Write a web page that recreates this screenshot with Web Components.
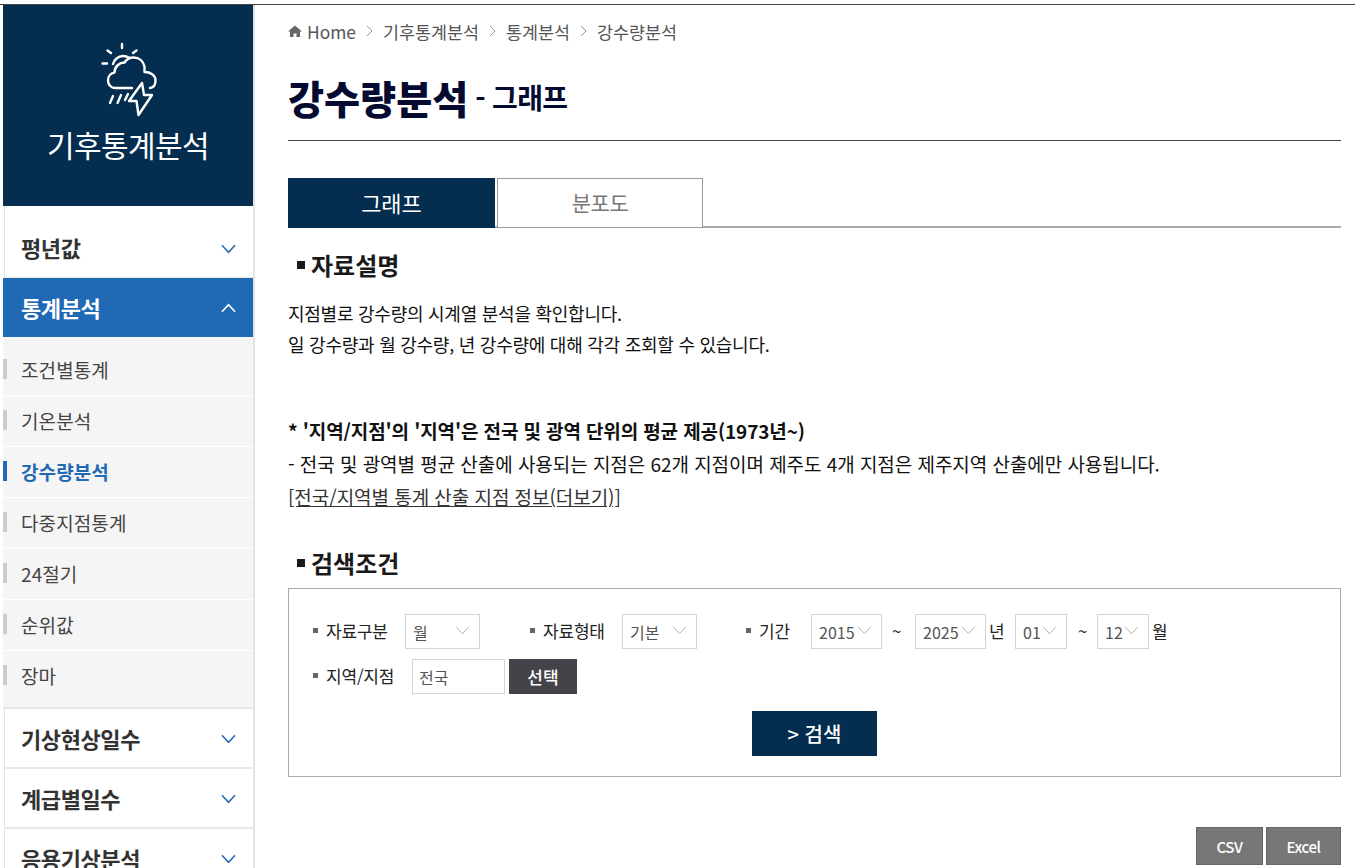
<!DOCTYPE html>
<html lang="ko">
<head>
<meta charset="utf-8">
<title>강수량분석</title>
<style>
html, body { margin: 0; height: 868px; overflow: hidden; background: #fff; }
body { font-family: "Noto Sans CJK KR", "Noto Sans", sans-serif; color: #111; }
</style>
</head>
<body>
<climate-page></climate-page>

<script>
const chevron = () => `<svg viewBox="0 0 16 10" fill="none" stroke="currentColor"><path d="M1 1l7 7.5L15 1"/></svg>`;

// one accordion row of the left menu
class SideItem extends HTMLElement {
    constructor() {
        super();
        this.attachShadow({ mode: 'open' }).innerHTML = `
<style>
:host { display: flex; align-items: center; justify-content: space-between; box-sizing: border-box;
  height: 60px; padding: 0 17px 0 16px; margin-left: 1px; background: #fff; border-left: 1px solid #e4e4e4;
  border-bottom: 2px solid #e8e8e8; font-size: 22px; font-weight: 700; letter-spacing: -.4px; color: #333; }
:host([open]) { height: 59px; margin-left: 0; border: 0; padding-left: 18px; background: #1f69b5; color: #fff; }
:host(.first) { height: 72px; padding-top: 15px; border-bottom-width: 1px; }
slot { display: block; }
:host([open]) slot { margin-bottom: 2px; }
:host(.first) slot { margin-bottom: 4px; }
svg { width: 15px; height: 10px; color: #2a6cb0; stroke-width: 1.7; margin-top: 2px; }
:host([open]) svg, :host(.first) svg { margin-top: 0; }
:host([open]) svg { transform: rotate(180deg); color: #fff; }
</style>
<slot></slot>${chevron()}`;
    }
}
customElements.define('side-item', SideItem);

// sub menu entry with the small bar on its left edge
class SideSub extends HTMLElement {
    constructor() {
        super();
        this.attachShadow({ mode: 'open' }).innerHTML = `
<style>
:host { display: flex; align-items: center; box-sizing: border-box; height: 51px; padding: 0 0 2px 18px; position: relative;
  border-bottom: 1px solid #fff; font-size: 19px; letter-spacing: .1px; color: #444; }
:host(:last-child) { border-bottom: 0; }
:host::before { content: ""; position: absolute; left: 0; top: 14px; width: 4px; height: 20px; background: #ccc; }
:host([active]) { color: #1f69b5; font-weight: 700; }
:host([active])::before { background: #1f69b5; }
</style>
<slot></slot>`;
    }
}
customElements.define('side-sub', SideSub);

class SideBar extends HTMLElement {
    constructor() {
        super();
        this.attachShadow({ mode: 'open' }).innerHTML = `
<style>
:host { display: block; flex: none; width: 250px; margin-left: 3px; border-right: 2px solid #e4e4e4; }
.head { height: 201px; background: #042d4f; color: #fff; display: flex; flex-direction: column; align-items: center; box-sizing: border-box; padding-top: 37px; }
.head svg { width: 58px; height: 76px; margin-left: 2px; flex: none; }
.head div { font-size: 30px; line-height: 44px; margin-top: 4px; letter-spacing: -.6px; }
.subs { background: #f5f5f5; padding: 8px 0 5px; border-bottom: 2px solid #e8e8e8; }
</style>
<div class="head">
  <svg viewBox="100 42 58 76" fill="none" stroke="#fff" stroke-width="2.400" stroke-linecap="round" stroke-linejoin="round">
    <path d="M122 44v4M107.500 50.500l3.500 2.500M136.500 50.500l-3.500 2.500M102.500 63.500h4.500"/>
    <path d="M113 64c1-4 5-8 10-8 3 0 5 1 7 2"/>
    <path d="M132 88h-17c-4 0-7-3.500-7-7.500 0-4.500 3-7.500 6.500-8 0-6 5-10 10-10 2-3 5-5 9-5 6 0 10 4 11 9 0 2 0 4 0 5.500 6 0 11 3 11 8.500 0 4-2 7-5.500 7.500"/>
    <path d="M113 96l-3 7M121 95l-3.500 8M128 94l-3 6"/>
    <path d="M142 83l-13 18h7.500l2 14 13.500-20h-8l-2-12z"/>
  </svg>
  <div>기후통계분석</div>
</div>
<side-item class="first">평년값</side-item>
<side-item open>통계분석</side-item>
<div class="subs">
  <side-sub>조건별통계</side-sub>
  <side-sub>기온분석</side-sub>
  <side-sub active>강수량분석</side-sub>
  <side-sub>다중지점통계</side-sub>
  <side-sub>24절기</side-sub>
  <side-sub>순위값</side-sub>
  <side-sub>장마</side-sub>
</div>
<side-item>기상현상일수</side-item>
<side-item>계급별일수</side-item>
<side-item>응용기상분석</side-item>`;
    }
}
customElements.define('side-bar', SideBar);

class CrumbBar extends HTMLElement {
    constructor() {
        super();
        const sep = `<svg class="sep" viewBox="0 0 7 12" fill="none" stroke="#999" stroke-width="1"><path d="M1 1l5 5-5 5"/></svg>`;
        this.attachShadow({ mode: 'open' }).innerHTML = `
<style>
:host { display: flex; align-items: center; height: 52px; font-size: 17.400px; color: #555; }
.home { width: 14px; height: 12px; margin-right: 5px; }
.sep { width: 7px; height: 12px; margin: 0 10px; }
</style>
<svg class="home" viewBox="0 0 14 12" fill="#666"><path d="M7 .5L0 6.500h2V12h3.500V8.500h3V12H12V6.500h2z"/></svg>
<span>Home</span>${sep}<span>기후통계분석</span>${sep}<span>통계분석</span>${sep}<span>강수량분석</span>`;
    }
}
customElements.define('crumb-bar', CrumbBar);

class PageTitle extends HTMLElement {
    constructor() {
        super();
        this.attachShadow({ mode: 'open' }).innerHTML = `
<style>
:host { display: flex; align-items: center; box-sizing: border-box; height: 84px; border-bottom: 1px solid #444; padding: 2px 0 6px; color: #050a30; font-weight: 700; }
b { font-size: 39.200px; margin-right: 7px; }
span { font-size: 28px; letter-spacing: -.7px; font-weight: 700; }
</style>
<b>강수량분석</b><span>- 그래프</span>`;
    }
}
customElements.define('page-title', PageTitle);

class TabBar extends HTMLElement {
    constructor() {
        super();
        this.attachShadow({ mode: 'open' }).innerHTML = `
<style>
:host { display: flex; margin-top: 37px; height: 50px; box-shadow: inset 0 -2px 0 #aaa; font-size: 22px; }
div { display: flex; align-items: center; justify-content: center; box-sizing: border-box; padding-bottom: 2px; }
.on { width: 207px; background: #042d4f; color: #fff; margin-right: 2px; }
.off { width: 206px; background: #fff; border: 1px solid #999; color: #777; font-size: 21px; letter-spacing: -.5px; }
</style>
<div class="on">그래프</div><div class="off">분포도</div>`;
    }
}
customElements.define('tab-bar', TabBar);

class SectionHead extends HTMLElement {
    constructor() {
        super();
        this.attachShadow({ mode: 'open' }).innerHTML = `
<style>
:host { display: flex; align-items: center; padding-left: 9px; font-size: 24px; font-weight: 700; color: #1a1a1a; line-height: 36px; }
:host::before { content: ""; width: 8px; height: 8px; background: #1a1a1a; margin-right: 6px; }
</style>
<slot></slot>`;
    }
}
customElements.define('section-head', SectionHead);

// the fake select box: text plus thin chevron
class FieldSelect extends HTMLElement {
    constructor() {
        super();
        this.attachShadow({ mode: 'open' }).innerHTML = `
<style>
:host { display: flex; align-items: center; justify-content: space-between; box-sizing: border-box; height: 35px; flex: none;
  background: #fff; border: 1px solid #d5d5d5; padding: 0 9px 0 7px; font-size: 16px; color: #555; }
svg { width: 15px; height: 9px; color: #aaa; margin-top: -3px; stroke-width: 1; }
</style>
<slot></slot>${chevron()}`;
    }
}
customElements.define('field-select', FieldSelect);

class FieldLabel extends HTMLElement {
    constructor() {
        super();
        this.attachShadow({ mode: 'open' }).innerHTML = `
<style>
:host { display: flex; align-items: center; flex: none; font-size: 17px; letter-spacing: -.2px; color: #222; padding-bottom: 2px; }
:host::before { content: ""; width: 5px; height: 5px; background: #666; margin-right: 8px; }
</style>
<slot></slot>`;
    }
}
customElements.define('field-label', FieldLabel);

class SearchForm extends HTMLElement {
    constructor() {
        super();
        this.attachShadow({ mode: 'open' }).innerHTML = `
<style>
:host { display: block; box-sizing: border-box; height: 189px; border: 1px solid #aaa; padding: 25px 0 0 24px; font-size: 17px; }
.row { display: flex; align-items: center; height: 35px; margin-bottom: 10px; }
.t { flex: none; color: #222; padding-bottom: 2px; }
.input { box-sizing: border-box; width: 93px; height: 35px; border: 1px solid #d5d5d5; display: flex; align-items: center; padding-left: 6px; font-size: 16px; color: #555; }
.pick { width: 68px; height: 35px; margin-left: 4px; background: #434349; color: #fff; font-weight: 500; display: flex; align-items: center; justify-content: center; }
.go { width: 125px; height: 45px; margin: 17px 0 0 439px; background: #042d4f; color: #fff; font-size: 20px; font-weight: 500; display: flex; align-items: center; justify-content: center; }
</style>
<div class="row">
  <field-label style="width:92px">자료구분</field-label>
  <field-select style="width:75px">월</field-select>
  <field-label style="width:92px;margin-left:50px">자료형태</field-label>
  <field-select style="width:75px">기본</field-select>
  <field-label style="width:65px;margin-left:49px">기간</field-label>
  <field-select style="width:71px">2015</field-select>
  <span class="t" style="margin:0 12px 0 10px;width:11px">~</span>
  <field-select style="width:71px">2025</field-select>
  <span class="t" style="margin:0 10px 0 3px;width:16px">년</span>
  <field-select style="width:52px">01</field-select>
  <span class="t" style="margin:0 8px 0 11px;width:11px">~</span>
  <field-select style="width:52px">12</field-select>
  <span class="t" style="margin-left:3px">월</span>
</div>
<div class="row">
  <field-label style="width:99px">지역/지점</field-label>
  <div class="input">전국</div>
  <div class="pick">선택</div>
</div>
<div class="go">&gt; 검색</div>`;
    }
}
customElements.define('search-form', SearchForm);

class ExportBtn extends HTMLElement {
    constructor() {
        super();
        this.attachShadow({ mode: 'open' }).innerHTML = `
<style>
:host { display: flex; align-items: center; justify-content: center; box-sizing: border-box; height: 38px; background: #777; border: 1px solid #666; color: #fff; font-size: 15px; font-weight: 500; letter-spacing: -.5px; }
</style>
<slot></slot>`;
    }
}
customElements.define('export-btn', ExportBtn);

class ClimatePage extends HTMLElement {
    constructor() {
        super();
        this.attachShadow({ mode: 'open' }).innerHTML = `
<style>
:host { display: flex; margin-top: 4px; border-top: 1px solid #444; height: 863px; overflow: hidden; }
main { flex: 1; min-width: 0; padding: 0 14px 0 33px; font-size: 18px; color: #111; }
.head1 { margin-top: 19px; }
.desc { margin: 15px 0 0; line-height: 31px; letter-spacing: -.25px; }
.note { margin: 54px 0 0; line-height: 33px; font-size: 19px; letter-spacing: -.05px; }
.note b { font-weight: 700; letter-spacing: -.12px; }
.note u { color: #333; }
.head2 { margin-top: 32px; margin-bottom: 7px; }
.export { display: flex; justify-content: flex-end; gap: 3px; margin-top: 50px; }
</style>
<side-bar></side-bar>
<main>
  <crumb-bar></crumb-bar>
  <page-title></page-title>
  <tab-bar></tab-bar>
  <section-head class="head1">자료설명</section-head>
  <p class="desc">지점별로 강수량의 시계열 분석을 확인합니다.<br>일 강수량과 월 강수량, 년 강수량에 대해 각각 조회할 수 있습니다.</p>
  <p class="note"><b>* '지역/지점'의 '지역'은 전국 및 광역 단위의 평균 제공(1973년~)</b><br>- 전국 및 광역별 평균 산출에 사용되는 지점은 62개 지점이며 제주도 4개 지점은 제주지역 산출에만 사용됩니다.<br><u>[전국/지역별 통계 산출 지점 정보(더보기)]</u></p>
  <section-head class="head2">검색조건</section-head>
  <search-form></search-form>
  <div class="export"><export-btn style="width:67px">CSV</export-btn><export-btn style="width:75px">Excel</export-btn></div>
</main>`;
    }
}
customElements.define('climate-page', ClimatePage);
</script>
</body>
</html>
